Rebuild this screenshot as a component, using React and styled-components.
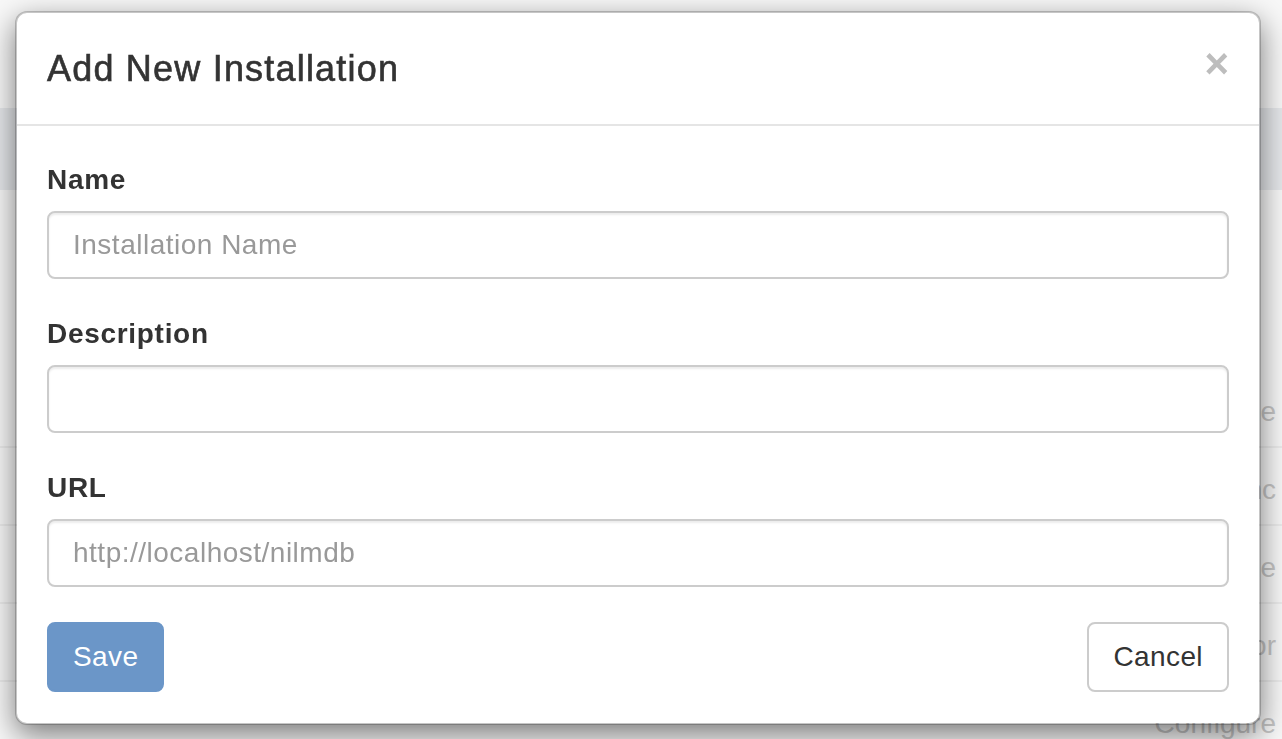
import React from 'react'
import styled, { createGlobalStyle } from 'styled-components'

const GlobalStyle = createGlobalStyle`
  html, body {
    margin: 0;
    padding: 0;
    background: #f8f8f8;
    font-family: "Liberation Sans", Arial, sans-serif;
    color: #333;
  }
  * { box-sizing: border-box; }
`

const rows = ['Home', 'Sync', 'Home', 'Editor', 'Configure']

const App = () => (
  <>
    <GlobalStyle />
    <Page>
      <TopSpace />
      <Band />
      <Table>
        {rows.map((r, i) => (
          <Row key={i}>
            <Cell>{r}</Cell>
          </Row>
        ))}
      </Table>
    </Page>

    <Overlay>
      <Modal>
        <Header>
          <Title>Add New Installation</Title>
          <Close type='button' aria-label='Close'>×</Close>
        </Header>
        <Body>
          <Group>
            <Label>Name</Label>
            <Input placeholder='Installation Name' />
          </Group>
          <Group>
            <Label>Description</Label>
            <Input />
          </Group>
          <Group>
            <Label>URL</Label>
            <Input placeholder='http://localhost/nilmdb' />
          </Group>
          <Actions>
            <Button primary disabled>Save</Button>
            <Button>Cancel</Button>
          </Actions>
        </Body>
      </Modal>
    </Overlay>
  </>
)

export default App

const Page = styled.div`
  width: 100%;
  height: 739px;
  overflow: hidden;
  display: flex;
  flex-direction: column;
`

const TopSpace = styled.div`
  height: 108px;
  flex-shrink: 0;
`

const Band = styled.div`
  height: 82px;
  flex-shrink: 0;
  background: #e6e8eb;
`

const Table = styled.div`
  display: flex;
  flex-direction: column;
  padding-top: 180px;
`

const Row = styled.div`
  height: 78px;
  flex-shrink: 0;
  border-bottom: 2px solid #ececec;
  display: flex;
  justify-content: flex-end;
  align-items: flex-start;
  padding: 26px 6px 0 0;
`

const Cell = styled.span`
  font-size: 28px;
  line-height: 32px;
  color: #c6c6c6;
  white-space: nowrap;
`

const Overlay = styled.div`
  position: fixed;
  inset: 0;
  padding: 11px 21px 0 15px;
`

const Modal = styled.div`
  width: 1246px;
  background: #fff;
  border: 2px solid rgba(0, 0, 0, 0.2);
  border-radius: 12px;
  box-shadow: 0 10px 30px rgba(0, 0, 0, 0.5);
  background-clip: padding-box;
`

const Header = styled.div`
  display: flex;
  justify-content: space-between;
  align-items: flex-start;
  padding: 30px;
  border-bottom: 2px solid #e5e5e5;
`

const Title = styled.h4`
  margin: 0;
  font-size: 36px;
  line-height: 51px;
  font-weight: 400;
  letter-spacing: 1.2px;
  color: #333;
  -webkit-text-stroke: 0.6px #333;
`

const Close = styled.button`
  background: none;
  border: 0;
  padding: 0;
  font-family: "Liberation Sans", Arial, sans-serif;
  font-size: 42px;
  font-weight: 700;
  line-height: 1;
  color: #bdbdbd;
  cursor: pointer;
`

const Body = styled.div`
  padding: 29px 30px 31px;
`

const Group = styled.div`
  display: flex;
  flex-direction: column;
  margin-bottom: 30px;
`

const Label = styled.label`
  font-size: 28px;
  line-height: 40px;
  font-weight: 700;
  letter-spacing: 0.7px;
  padding-top: 5px;
  margin-bottom: 11px;
  color: #333;
`

const Input = styled.input`
  height: 68px;
  width: 100%;
  padding: 0 24px;
  font-family: "Liberation Sans", Arial, sans-serif;
  font-size: 28px;
  letter-spacing: 0.5px;
  color: #555;
  background: #fff;
  border: 2px solid #ccc;
  border-radius: 8px;
  box-shadow: inset 0 2px 2px rgba(0, 0, 0, 0.075);
  outline: none;
  &::placeholder {
    color: #999;
  }
`

const Actions = styled.div`
  display: flex;
  justify-content: space-between;
  padding-top: 5px;
`

const Button = styled.button`
  height: 70px;
  padding: 0 24px;
  font-family: "Liberation Sans", Arial, sans-serif;
  font-size: 28px;
  letter-spacing: 0.4px;
  border-radius: 8px;
  border: 2px solid ${p => (p.primary ? '#6b96c8' : '#ccc')};
  background: ${p => (p.primary ? '#6b96c8' : '#fff')};
  color: ${p => (p.primary ? '#fff' : '#333')};
  cursor: pointer;
  &:disabled {
    cursor: not-allowed;
  }
`
